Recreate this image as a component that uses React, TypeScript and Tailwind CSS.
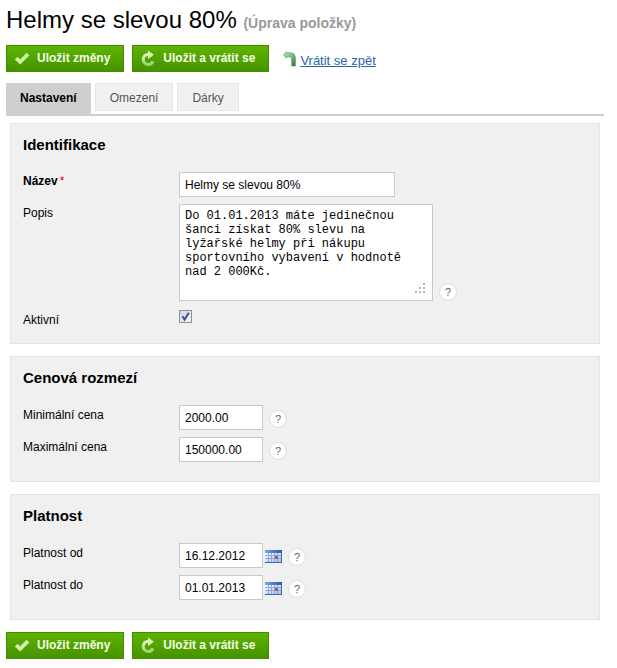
import { useId, useState } from 'react';
import type { ReactNode } from 'react';

const TABS = ['Nastavení', 'Omezení', 'Dárky'];

const INPUT_CLASS =
  'h-[25px] border border-[#c8c8c8] bg-white px-[5px] text-xs text-black outline-none focus:border-[#8a8a8a]';

const BUTTON_CLASS =
  'flex h-[27px] items-center gap-[7px] border border-[#458c00] bg-linear-to-b from-[#5db400] to-[#479200] pr-[13px] pb-px pl-[7px] text-xs font-bold text-[#f4ffe8]';

function CheckIcon() {
  return (
    <svg width="16" height="13" viewBox="0 0 16 13" aria-hidden="true">
      <path d="M0.8 7.6 L3.6 4.8 L6.2 7.2 L12.6 0.8 L15.4 3.4 L6.2 12.6 Z" fill="#cdf0a8" />
    </svg>
  );
}

function ReloadIcon() {
  return (
    <svg width="16" height="17" viewBox="0 0 16 17" aria-hidden="true">
      <defs>
        <linearGradient id="reload-ring" x1="0" y1="0" x2="0" y2="1">
          <stop offset="0" stopColor="#d9f6bd" />
          <stop offset="1" stopColor="#9fd476" />
        </linearGradient>
      </defs>
      <path
        d="M9 4.6 H7.4 A5 5 0 1 0 12.9 11.4"
        fill="none"
        stroke="url(#reload-ring)"
        strokeWidth="3"
      />
      <path d="M8 0.2 L13.8 4.8 L8 9.2 Z" fill="#d5f3b4" />
    </svg>
  );
}

function BackIcon() {
  return (
    <svg width="13" height="16" viewBox="0 0 13 16" aria-hidden="true">
      <defs>
        <linearGradient id="back-arrow" x1="0" y1="0" x2="1" y2="1">
          <stop offset="0" stopColor="#b5e2b5" />
          <stop offset="0.5" stopColor="#7cc083" />
          <stop offset="1" stopColor="#2a6e35" />
        </linearGradient>
      </defs>
      <path
        d="M0.4 4 L3.6 0.6 V1.8 H7 C10.6 1.8 12.4 3.8 12.4 7.4 V15 H8.6 V8.4 C8.6 6.6 7.6 5.8 6 5.8 H3.6 V7.2 Z"
        fill="url(#back-arrow)"
        stroke="#4f9a58"
        strokeWidth="0.6"
      />
    </svg>
  );
}

function CalendarIcon() {
  return (
    <svg width="17" height="13" viewBox="0 0 17 13" aria-hidden="true">
      <defs>
        <linearGradient id="calendar-page" x1="0" y1="0" x2="1" y2="1">
          <stop offset="0" stopColor="#ffffff" />
          <stop offset="1" stopColor="#a9bdea" />
        </linearGradient>
        <linearGradient id="calendar-head" x1="0" y1="0" x2="1" y2="0">
          <stop offset="0" stopColor="#7fa0e2" />
          <stop offset="1" stopColor="#3355ad" />
        </linearGradient>
      </defs>
      <rect width="17" height="13" fill="#4763b4" />
      <rect width="17" height="3" fill="url(#calendar-head)" />
      <rect y="3" width="16" height="9" fill="url(#calendar-page)" />
      <path
        d="M3.5 3V12M6.5 3V12M9.5 3V12M12.5 3V12M0 5.5H16M0 8.5H16"
        stroke="#8ba5de"
        strokeWidth="1"
      />
      <rect x="10" y="6" width="3" height="3" fill="#776a86" />
    </svg>
  );
}

function HelpButton() {
  return (
    <button
      type="button"
      aria-label="Nápověda"
      className="flex size-[18px] shrink-0 items-center justify-center rounded-full border border-[#dcdcdc] bg-white text-[11px] leading-none text-[#666666]"
    >
      ?
    </button>
  );
}

function ActionButtons() {
  return (
    <>
      <button type="button" className={BUTTON_CLASS}>
        <CheckIcon />
        Uložit změny
      </button>
      <button type="button" className={BUTTON_CLASS}>
        <ReloadIcon />
        Uložit a vrátit se
      </button>
    </>
  );
}

function Section({ title, children }: { title: string; children: ReactNode }) {
  return (
    <section className="border border-[#e4e4e4] bg-[#f0f0f0] px-3 pt-3 pb-[19px]">
      <h2 className="text-[15px] leading-[18px] font-bold">{title}</h2>
      <div className="mt-[18px] flex flex-col gap-[7px]">{children}</div>
    </section>
  );
}

interface FieldProps {
  label: string;
  value: string;
  withCalendar?: boolean;
}

function SmallField({ label, value, withCalendar }: FieldProps) {
  const id = useId();
  return (
    <div className="flex items-start">
      <label htmlFor={id} className="w-[156px] shrink-0 text-xs leading-5">
        {label}
      </label>
      <input id={id} defaultValue={value} className={`${INPUT_CLASS} w-[84px]`} />
      {withCalendar && (
        <button type="button" aria-label="Kalendář" className="mt-[7px] ml-[2px]">
          <CalendarIcon />
        </button>
      )}
      <div className="mt-[5px] ml-[6px]">
        <HelpButton />
      </div>
    </div>
  );
}

export default function App() {
  const [activeTab, setActiveTab] = useState(TABS[0]);
  const [active, setActive] = useState(true);

  return (
    <main className="min-h-screen bg-white pt-[5px] pr-[13px] pb-2 pl-[6px] font-['Liberation_Sans',Arial,sans-serif] text-black">
      <h1 className="text-2xl leading-[30px]">
        Helmy se slevou 80%{' '}
        <span className="text-sm font-bold text-[#999999]">(Úprava položky)</span>
      </h1>

      <div className="mt-[10px] flex items-center gap-2">
        <ActionButtons />
        <a href="#" className="ml-[6px] flex items-center gap-1 text-[13px] text-[#2a64b0]">
          <BackIcon />
          <span className="pt-1 underline">Vrátit se zpět</span>
        </a>
      </div>

      {/* Tabs */}
      <div className="mt-[11px] flex items-start gap-1 border-b-2 border-[#cfcfcf]" role="tablist">
        {TABS.map((tab) => (
          <button
            key={tab}
            type="button"
            role="tab"
            aria-selected={tab === activeTab}
            onClick={() => setActiveTab(tab)}
            className={
              tab === activeTab
                ? 'h-[31px] bg-[#cfcfcf] px-[14px] pb-[2px] text-xs font-bold text-black'
                : 'h-[28px] border border-[#e6e6e6] bg-[#f1f1f1] px-[14px] pt-px text-xs text-[#555555]'
            }
          >
            {tab}
          </button>
        ))}
      </div>

      <div className="mx-1 mt-[7px] flex flex-col gap-3">
        <Section title="Identifikace">
          <div className="flex items-start">
            <label htmlFor="name" className="w-[156px] shrink-0 text-xs leading-[18px] font-bold">
              Název<span className="ml-[2px] font-normal text-[#dd0000]">*</span>
            </label>
            <input id="name" defaultValue="Helmy se slevou 80%" className={`${INPUT_CLASS} w-[216px]`} />
          </div>
          <div className="flex items-start">
            <label htmlFor="description" className="w-[156px] shrink-0 text-xs leading-[18px]">
              Popis
            </label>
            <div className="relative">
              <textarea
                id="description"
                className="block h-[97px] w-[254px] resize-none border border-[#c8c8c8] bg-white px-[5px] py-1 font-['Liberation_Mono','Courier_New',monospace] text-xs leading-[14px] outline-none"
                defaultValue="Do 01.01.2013 máte jedinečnou šanci získat 80% slevu na lyžařské helmy při nákupu sportovního vybavení v hodnotě nad 2 000Kč."
              />
              <svg className="absolute right-[7px] bottom-[7px]" width="11" height="11" viewBox="0 0 11 11" aria-hidden="true">
                <path
                  d="M8 0h2v2h-2zM4 4h2v2h-2zM8 4h2v2h-2zM0 8h2v2h-2zM4 8h2v2h-2zM8 8h2v2h-2z"
                  fill="#b4b4b4"
                />
              </svg>
            </div>
            <div className="ml-[6px] self-end">
              <HelpButton />
            </div>
          </div>
          <div className="flex h-4 items-start">
            <label htmlFor="active" className="w-[156px] shrink-0 text-xs leading-6">
              Aktivní
            </label>
            <span className="relative mt-[2px] size-[13px]">
              <input
                id="active"
                type="checkbox"
                checked={active}
                onChange={(e) => setActive(e.target.checked)}
                className="block size-[13px] appearance-none border border-[#8e8f8f] bg-linear-to-br from-[#cfd5dd] to-[#f7f7f7]"
              />
              {active && (
                <svg className="pointer-events-none absolute inset-0" width="13" height="13" viewBox="0 0 13 13" aria-hidden="true">
                  <path d="M3.4 6.2 L5.6 9.6 L9.8 2.8" fill="none" stroke="#3f4f94" strokeWidth="2" />
                </svg>
              )}
            </span>
          </div>
        </Section>

        <Section title="Cenová rozmezí">
          <SmallField label="Minimální cena" value="2000.00" />
          <SmallField label="Maximální cena" value="150000.00" />
        </Section>

        <Section title="Platnost">
          <SmallField label="Platnost od" value="16.12.2012" withCalendar />
          <SmallField label="Platnost do" value="01.01.2013" withCalendar />
        </Section>
      </div>

      <div className="mt-3 flex items-center gap-2">
        <ActionButtons />
      </div>
    </main>
  );
}
